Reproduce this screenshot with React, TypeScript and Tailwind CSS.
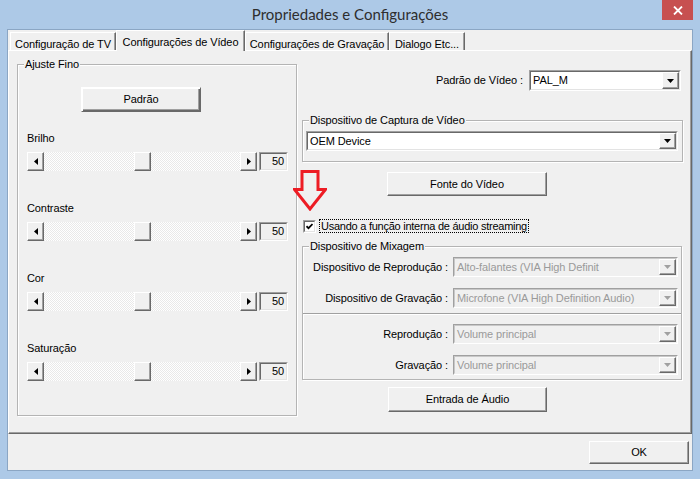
import React from 'react';

const raised =
  'border border-t-white border-l-white border-r-[#696969] border-b-[#696969] shadow-[inset_-1px_-1px_0_#a0a0a0]';
const sunkenOuter = 'border border-t-[#a0a0a0] border-l-[#a0a0a0] border-r-white border-b-white';
const sunkenInner = 'border border-t-[#696969] border-l-[#696969] border-r-[#e3e3e3] border-b-[#e3e3e3]';

function Button({ label, className }: { label: string; className: string }) {
  return (
    <div className={`flex items-center justify-center bg-[#f0f0f0] ${raised} ${className}`}>{label}</div>
  );
}

function Arrow({ dir }: { dir: 'left' | 'right' }) {
  return (
    <div className={`w-[17px] h-full flex items-center justify-center bg-[#f0f0f0] ${raised}`}>
      <svg width="4" height="7" viewBox="0 0 4 7">
        <path d={dir === 'left' ? 'M4 0v7L0 3.5z' : 'M0 0v7L4 3.5z'} fill="#000" />
      </svg>
    </div>
  );
}

function Slider({ label, value }: { label: string; value: number }) {
  const thumb = Math.round(((196 - 17) * value) / 100);
  return (
    <div className="flex flex-col">
      <span className="leading-[13px] mb-[7px]">{label}</span>
      <div className="flex items-center gap-[2px]">
        <div className="flex w-[230px] h-[19px]">
          <Arrow dir="left" />
          <div className="flex-1 bg-[repeating-conic-gradient(#ffffff_0%_25%,#e9e9e9_0%_50%)] bg-[length:2px_2px]">
            <div className={`w-[17px] h-full bg-[#f0f0f0] ${raised}`} style={{ marginLeft: thumb }} />
          </div>
          <Arrow dir="right" />
        </div>
        <div className={`w-[29px] h-[19px] bg-[#f0f0f0] ${sunkenOuter}`}>
          <div className={`h-full flex items-center justify-end pr-[2px] ${sunkenInner}`}>{value}</div>
        </div>
      </div>
    </div>
  );
}

function Combo({ value, className, disabled }: { value: string; className: string; disabled?: boolean }) {
  return (
    <div className={`${sunkenOuter} ${className}`}>
      <div
        className={`h-full flex ${sunkenInner} ${disabled ? 'bg-[#f0f0f0] text-[#9a9a9a] border-r-[#f0f0f0] border-b-[#f0f0f0] border-t-[#c8c8c8] border-l-[#c8c8c8]' : 'bg-white text-black'}`}
      >
        <span className="flex-1 flex items-center pl-[2px] whitespace-nowrap overflow-hidden">{value}</span>
        <div className={`w-[17px] flex items-center justify-center bg-[#f0f0f0] ${raised}`}>
          <svg width="7" height="4" viewBox="0 0 7 4">
            <path d="M0 0h7L3.5 4z" fill={disabled ? '#a0a0a0' : '#000'} />
          </svg>
        </div>
      </div>
    </div>
  );
}

function Group({ title, className, children }: { title: string; className: string; children: React.ReactNode }) {
  return (
    <fieldset className={`border border-[#b4b4b4] shadow-[inset_1px_1px_0_#fff,1px_1px_0_#fff] flex flex-col ${className}`}>
      <legend className="ml-[6px] px-[1px] leading-[13px] bg-[#f0f0f0]">{title}</legend>
      {children}
    </fieldset>
  );
}

function MixRow({ label, value, className }: { label: string; value: string; className: string }) {
  return (
    <div className={`flex items-center justify-end gap-[5px] pr-[3px] ${className}`}>
      <span className="whitespace-nowrap">{label}</span>
      <Combo value={value} disabled className="w-[225px] h-[20px]" />
    </div>
  );
}

const tabs = [
  { label: 'Configuração de TV', w: 'w-[106px]' },
  { label: 'Configurações de Vídeo', w: 'w-[129px]', active: true },
  { label: 'Configurações de Gravação', w: 'w-[144px]' },
  { label: 'Dialogo Etc...', w: 'w-[76px]' },
];

export default function App() {
  return (
    <div className="w-[700px] h-[479px] bg-[#adc9e7] flex flex-col font-['Liberation_Sans',Arial,sans-serif] text-[11px] tracking-[-0.1px] text-black">
      <div className="h-[29px] grid grid-cols-[1fr_auto_1fr]">
        <div />
        <div className="pt-[4px] font-['Lato','Noto_Sans',sans-serif] text-[15px] leading-[20px] tracking-normal text-[#2e2e2e]">
          Propriedades e Configurações
        </div>
        <div className="flex justify-end items-start pr-[7px]">
          <div className="w-[31px] h-[20px] bg-[#c75050] flex items-center justify-center">
            <svg width="10" height="9" viewBox="0 0 10 9">
              <path d="M1 0.5l8 8M9 0.5l-8 8" stroke="#fff" strokeWidth="1.8" />
            </svg>
          </div>
        </div>
      </div>

      <div className="mx-[7px] h-[442px] border border-[#8ba6c4] bg-[#f0f0f0] flex flex-col">
        {/* tabs */}
        <div className="h-[20px] flex items-end pl-[2px]">
          {tabs.map((t) => (
            <div
              key={t.label}
              className={`${t.w} flex justify-center whitespace-nowrap border-t border-l border-t-white border-l-white border-r border-r-[#696969] shadow-[inset_-1px_0_0_#a0a0a0] ${
                t.active ? 'h-[21px] -mb-px relative z-10 bg-[#f0f0f0] pt-[3px]' : 'h-[18px] pt-[3px]'
              }`}
            >
              {t.label}
            </div>
          ))}
        </div>

        {/* panel */}
        <div className="relative h-[384px] border border-t-white border-l-white border-r-[#696969] border-b-[#696969] shadow-[inset_-1px_-1px_0_#a0a0a0] flex items-start pl-[8px] pr-[8px] gap-[5px]">
          <Group title="Ajuste Fino" className="w-[280px] h-[358px] mt-[7px]">
            <Button label="Padrão" className="ml-[63px] mt-[16px] w-[120px] h-[25px] border-[#5a5a5a] shadow-[inset_1px_1px_0_#fff,inset_-1px_-1px_0_#696969,inset_-2px_-2px_0_#a0a0a0]" />
            <div className="flex flex-col gap-[31px] pl-[9px] mt-[20px]">
              <Slider label="Brilho" value={50} />
              <Slider label="Contraste" value={50} />
              <Slider label="Cor" value={50} />
              <Slider label="Saturação" value={50} />
            </div>
          </Group>

          <div className="w-[381px] flex flex-col pt-[19px]">
            <div className="flex items-center justify-end gap-[6px] pr-[2px]">
              <span>Padrão de Vídeo :</span>
              <Combo value="PAL_M" className="w-[152px] h-[21px]" />
            </div>

            <Group title="Dispositivo de Captura de Vídeo" className="mt-[23px] w-[381px] pb-[10px]">
              <Combo value="OEM Device" className="ml-[3px] mt-[4px] w-[372px] h-[20px]" />
            </Group>

            <Button label="Fonte do Vídeo" className="mt-[10px] ml-[85px] w-[160px] h-[24px]" />

            <div className="mt-[23px] flex items-center h-[14px]">
              <div className={`ml-[1px] w-[13px] h-[13px] ${sunkenOuter}`}>
                <div className={`w-full h-full bg-white flex items-center justify-center ${sunkenInner}`}>
                  <svg width="7" height="7" viewBox="0 0 7 7">
                    <path d="M0.5 3.2l2 2 4-4.2" stroke="#000" strokeWidth="1.7" fill="none" />
                  </svg>
                </div>
              </div>
              <span className="ml-[3px] px-[1px] h-[14px] leading-[12px] tracking-[-0.25px] border border-dotted border-black whitespace-nowrap">
                Usando a função interna de áudio streaming
              </span>
            </div>

            <Group title="Dispositivo de Mixagem" className="mt-[7px] w-[380px] pb-[4px]">
              <MixRow label="Dispositivo de Reprodução :" value="Alto-falantes (VIA High Definit" className="mt-[4px]" />
              <MixRow label="Dispositivo de Gravação :" value="Microfone (VIA High Definition Audio)" className="mt-[11px]" />
              <div className="mt-[5px] border-t border-t-[#a0a0a0] border-b border-b-white" />
              <MixRow label="Reprodução :" value="Volume principal" className="mt-[9px]" />
              <MixRow label="Gravação :" value="Volume principal" className="mt-[11px]" />
            </Group>

            <Button label="Entrada de Áudio" className="mt-[7px] ml-[86px] w-[159px] h-[25px]" />
          </div>

          <svg className="absolute left-[284px] top-[119px]" width="34" height="41" viewBox="0 0 34 41">
            <path d="M9 1.5h16v18h7.5L17 39 1.5 19.5H9z" fill="none" stroke="#ed1c24" strokeWidth="3" strokeLinejoin="miter" />
          </svg>
        </div>

        {/* footer */}
        <div className="flex-1 flex justify-end items-start pt-[7px] pr-[3px]">
          <Button label="OK" className="w-[100px] h-[23px]" />
        </div>
      </div>
    </div>
  );
}
